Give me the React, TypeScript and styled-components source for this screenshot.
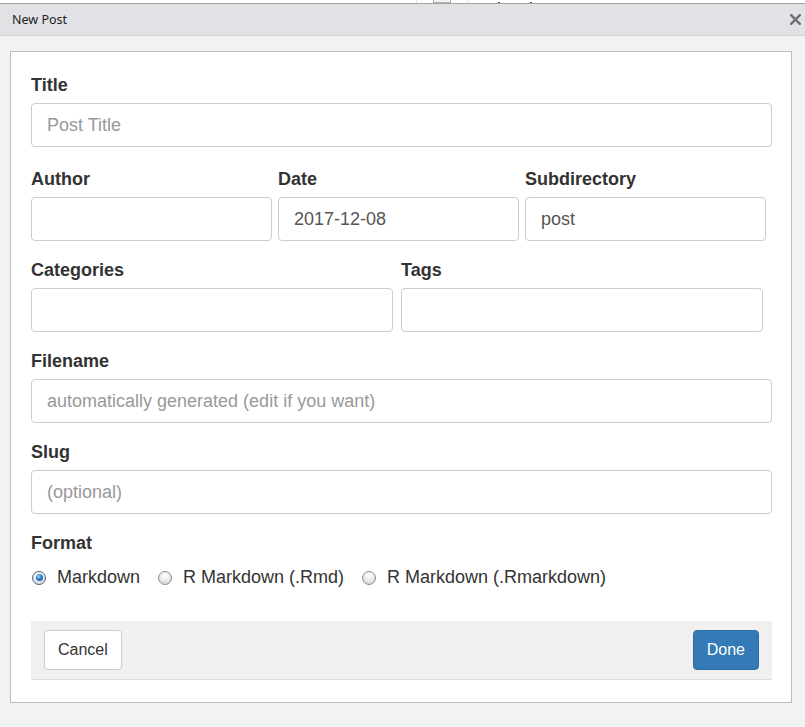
import React from "react";
import styled, { createGlobalStyle } from "styled-components";

const GlobalStyle = createGlobalStyle`
  html, body { margin: 0; padding: 0; }
  body {
    background: #f1f3f2;
    font-family: "Liberation Sans", Arial, sans-serif;
    color: #333;
  }
`;

const Window = styled.div`
  width: 805px;
  height: 727px;
  display: flex;
  flex-direction: column;
  overflow: hidden;
  background: #f1f3f2;
`;

const TopStrip = styled.div`
  height: 3px;
  background: #fff;
  border-bottom: 1px solid #a3a3a3;
  display: flex;
`;

const StripGap = styled.div<{ $w: number }>`
  width: ${(p) => p.$w}px;
`;

const StripPane = styled.div`
  width: 50px;
  border-left: 1px solid #e2e2e2;
  border-right: 1px solid #e2e2e2;
  display: flex;
  justify-content: center;
`;

const StripBox = styled.div`
  width: 18px;
  height: 3px;
  box-sizing: border-box;
  border: 1px solid #b0b0b0;
  border-top: none;
  background: #f4f4f4;
`;

const StripText = styled.div`
  width: 2px;
  height: 1px;
  margin-top: 2px;
  margin-left: 30px;
  background: #555;
`;

const TitleBar = styled.div`
  height: 31px;
  background: #e1e2e5;
  border-bottom: 1px solid #d3d4d6;
  display: flex;
  align-items: center;
  justify-content: space-between;
  padding: 0 4px 0 12px;
`;

const TitleText = styled.div`
  font-family: "Noto Sans", "Open Sans", sans-serif;
  font-size: 12.5px;
  color: #1e1e1e;
`;

const CloseIcon = styled.svg`
  width: 11px;
  height: 11px;
  display: block;
`;

const Body = styled.div`
  flex: 1;
  padding: 15px 13px 0 10px;
`;

const Panel = styled.div`
  background: #fff;
  border: 1px solid #bdbdbd;
  padding: 22px 19px 22px 20px;
`;

const Group = styled.div<{ $mb?: number }>`
  margin-bottom: ${(p) => (p.$mb ?? 18)}px;
`;

const Label = styled.label`
  display: block;
  font-weight: bold;
  font-size: 18px;
  line-height: 20px;
  padding-top: 1px;
  margin-bottom: 8px;
  color: #333;
`;

const Row = styled.div<{ $cols: string; $gap: number }>`
  display: grid;
  grid-template-columns: ${(p) => p.$cols};
  column-gap: ${(p) => p.$gap}px;
  margin-bottom: 18px;
`;

const Input = styled.input`
  display: block;
  box-sizing: border-box;
  width: 100%;
  height: 44px;
  padding: 1px 15px 0;
  border: 1px solid #cccccc;
  border-radius: 4px;
  background: #fff;
  font-family: "Liberation Sans", Arial, sans-serif;
  font-size: 18px;
  color: #555;
  outline: none;
  &::placeholder {
    color: #999;
  }
`;

const RadioRow = styled.div`
  display: flex;
  align-items: center;
  gap: 17px;
  padding-top: 6px;
  height: 20px;
  margin-bottom: 34px;
`;

const RadioItem = styled.label`
  display: flex;
  align-items: center;
  font-size: 18px;
  line-height: 20px;
  color: #333;
`;

const RadioDot = styled.span<{ $checked?: boolean }>`
  position: relative;
  box-sizing: border-box;
  width: 14px;
  height: 14px;
  border-radius: 50%;
  border: 1px solid ${(p) => (p.$checked ? "#4f6479" : "#8e8e8e")};
  background: radial-gradient(circle at 50% 30%, #ffffff 0%, #ececec 45%, #c9c9c9 100%);
  margin: 1px 11px 0 1px;
  &::after {
    content: "";
    display: ${(p) => (p.$checked ? "block" : "none")};
    position: absolute;
    left: 2.5px;
    top: 2.5px;
    width: 7px;
    height: 7px;
    border-radius: 50%;
    background: radial-gradient(circle at 40% 35%, #9fdcff 0%, #2b8ad6 40%, #0a3c78 100%);
  }
`;

const Footer = styled.div`
  background: #f0f0f0;
  border-bottom: 1px solid #dddddd;
  height: 58px;
  padding: 0 13px;
  display: flex;
  align-items: center;
  justify-content: space-between;
`;

const Button = styled.button<{ $primary?: boolean }>`
  height: 40px;
  padding: 0 13px;
  border-radius: 4px;
  border: 1px solid ${(p) => (p.$primary ? "#2e6da4" : "#cccccc")};
  background: ${(p) => (p.$primary ? "#337ab7" : "#ffffff")};
  color: ${(p) => (p.$primary ? "#ffffff" : "#333333")};
  font-family: "Liberation Sans", Arial, sans-serif;
  font-size: 16px;
  cursor: pointer;
`;

export default function App() {
  return (
    <>
      <GlobalStyle />
      <Window>
        <TopStrip>
          <StripGap $w={416} />
          <StripPane>
            <StripBox />
          </StripPane>
          <StripText />
          <StripText />
        </TopStrip>
        <TitleBar>
          <TitleText>New Post</TitleText>
          <CloseIcon viewBox="0 0 11 11">
            <path d="M1.2 1.2 L9.8 9.8 M9.8 1.2 L1.2 9.8" stroke="#6e6e6e" strokeWidth="2.4" strokeLinecap="square" />
          </CloseIcon>
        </TitleBar>
        <Body>
          <Panel>
            <Group $mb={21}>
              <Label>Title</Label>
              <Input placeholder="Post Title" readOnly />
            </Group>
            <Row $cols="241px 241px 241px" $gap={6}>
              <div>
                <Label>Author</Label>
                <Input readOnly />
              </div>
              <div>
                <Label>Date</Label>
                <Input defaultValue="2017-12-08" readOnly />
              </div>
              <div>
                <Label>Subdirectory</Label>
                <Input defaultValue="post" readOnly />
              </div>
            </Row>
            <Row $cols="362px 362px" $gap={8}>
              <div>
                <Label>Categories</Label>
                <Input readOnly />
              </div>
              <div>
                <Label>Tags</Label>
                <Input readOnly />
              </div>
            </Row>
            <Group>
              <Label>Filename</Label>
              <Input placeholder="automatically generated (edit if you want)" readOnly />
            </Group>
            <Group>
              <Label>Slug</Label>
              <Input placeholder="(optional)" readOnly />
            </Group>
            <Label>Format</Label>
            <RadioRow>
              <RadioItem>
                <RadioDot $checked />
                Markdown
              </RadioItem>
              <RadioItem>
                <RadioDot />
                R Markdown (.Rmd)
              </RadioItem>
              <RadioItem>
                <RadioDot />
                R Markdown (.Rmarkdown)
              </RadioItem>
            </RadioRow>
            <Footer>
              <Button>Cancel</Button>
              <Button $primary>Done</Button>
            </Footer>
          </Panel>
        </Body>
      </Window>
    </>
  );
}
